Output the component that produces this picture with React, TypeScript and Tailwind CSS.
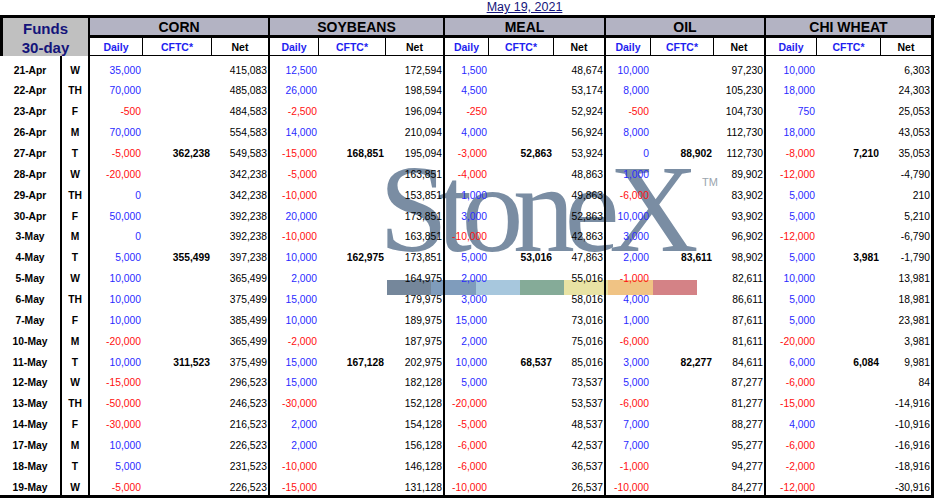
import React from "react";

type Cell = [string, string, string];

type Group = {
  name: string;
  d: string;
  c: string;
  n: string;
  edge: string;
};

const groups: Group[] = [
  { name: "CORN", d: "w-[53px]", c: "w-[69px]", n: "w-[56px]", edge: "border-r-[2px]" },
  { name: "SOYBEANS", d: "w-[49px]", c: "w-[67px]", n: "w-[57px]", edge: "border-r-[2px]" },
  { name: "MEAL", d: "w-[44px]", c: "w-[65px]", n: "w-[50px]", edge: "border-r-[2px]" },
  { name: "OIL", d: "w-[45px]", c: "w-[63px]", n: "w-[50px]", edge: "border-r-[2px]" },
  { name: "CHI WHEAT", d: "w-[51px]", c: "w-[64px]", n: "w-[50px]", edge: "border-r-[3px]" },
];

const rows: { date: string; day: string; v: Cell[] }[] = [
  { date: "21-Apr", day: "W", v: [["35,000", "", "415,083"], ["12,500", "", "172,594"], ["1,500", "", "48,674"], ["10,000", "", "97,230"], ["10,000", "", "6,303"]] },
  { date: "22-Apr", day: "TH", v: [["70,000", "", "485,083"], ["26,000", "", "198,594"], ["4,500", "", "53,174"], ["8,000", "", "105,230"], ["18,000", "", "24,303"]] },
  { date: "23-Apr", day: "F", v: [["-500", "", "484,583"], ["-2,500", "", "196,094"], ["-250", "", "52,924"], ["-500", "", "104,730"], ["750", "", "25,053"]] },
  { date: "26-Apr", day: "M", v: [["70,000", "", "554,583"], ["14,000", "", "210,094"], ["4,000", "", "56,924"], ["8,000", "", "112,730"], ["18,000", "", "43,053"]] },
  { date: "27-Apr", day: "T", v: [["-5,000", "362,238", "549,583"], ["-15,000", "168,851", "195,094"], ["-3,000", "52,863", "53,924"], ["0", "88,902", "112,730"], ["-8,000", "7,210", "35,053"]] },
  { date: "28-Apr", day: "W", v: [["-20,000", "", "342,238"], ["-5,000", "", "163,851"], ["-4,000", "", "48,863"], ["1,000", "", "89,902"], ["-12,000", "", "-4,790"]] },
  { date: "29-Apr", day: "TH", v: [["0", "", "342,238"], ["-10,000", "", "153,851"], ["1,000", "", "49,863"], ["-6,000", "", "83,902"], ["5,000", "", "210"]] },
  { date: "30-Apr", day: "F", v: [["50,000", "", "392,238"], ["20,000", "", "173,851"], ["3,000", "", "52,863"], ["10,000", "", "93,902"], ["5,000", "", "5,210"]] },
  { date: "3-May", day: "M", v: [["0", "", "392,238"], ["-10,000", "", "163,851"], ["-10,000", "", "42,863"], ["3,000", "", "96,902"], ["-12,000", "", "-6,790"]] },
  { date: "4-May", day: "T", v: [["5,000", "355,499", "397,238"], ["10,000", "162,975", "173,851"], ["5,000", "53,016", "47,863"], ["2,000", "83,611", "98,902"], ["5,000", "3,981", "-1,790"]] },
  { date: "5-May", day: "W", v: [["10,000", "", "365,499"], ["2,000", "", "164,975"], ["2,000", "", "55,016"], ["-1,000", "", "82,611"], ["10,000", "", "13,981"]] },
  { date: "6-May", day: "TH", v: [["10,000", "", "375,499"], ["15,000", "", "179,975"], ["3,000", "", "58,016"], ["4,000", "", "86,611"], ["5,000", "", "18,981"]] },
  { date: "7-May", day: "F", v: [["10,000", "", "385,499"], ["10,000", "", "189,975"], ["15,000", "", "73,016"], ["1,000", "", "87,611"], ["5,000", "", "23,981"]] },
  { date: "10-May", day: "M", v: [["-20,000", "", "365,499"], ["-2,000", "", "187,975"], ["2,000", "", "75,016"], ["-6,000", "", "81,611"], ["-20,000", "", "3,981"]] },
  { date: "11-May", day: "T", v: [["10,000", "311,523", "375,499"], ["15,000", "167,128", "202,975"], ["10,000", "68,537", "85,016"], ["3,000", "82,277", "84,611"], ["6,000", "6,084", "9,981"]] },
  { date: "12-May", day: "W", v: [["-15,000", "", "296,523"], ["15,000", "", "182,128"], ["5,000", "", "73,537"], ["5,000", "", "87,277"], ["-6,000", "", "84"]] },
  { date: "13-May", day: "TH", v: [["-50,000", "", "246,523"], ["-30,000", "", "152,128"], ["-20,000", "", "53,537"], ["-6,000", "", "81,277"], ["-15,000", "", "-14,916"]] },
  { date: "14-May", day: "F", v: [["-30,000", "", "216,523"], ["2,000", "", "154,128"], ["-5,000", "", "48,537"], ["7,000", "", "88,277"], ["4,000", "", "-10,916"]] },
  { date: "17-May", day: "M", v: [["10,000", "", "226,523"], ["2,000", "", "156,128"], ["-6,000", "", "42,537"], ["7,000", "", "95,277"], ["-6,000", "", "-16,916"]] },
  { date: "18-May", day: "T", v: [["5,000", "", "231,523"], ["-10,000", "", "146,128"], ["-6,000", "", "36,537"], ["-1,000", "", "94,277"], ["-2,000", "", "-18,916"]] },
  { date: "19-May", day: "W", v: [["-5,000", "", "226,523"], ["-15,000", "", "131,128"], ["-10,000", "", "26,537"], ["-10,000", "", "84,277"], ["-12,000", "", "-30,916"]] },
];

const bar = [
  "bg-[#75879b]",
  "bg-[#7f9cbc]",
  "bg-[#a7c7dd]",
  "bg-[#85ab98]",
  "bg-[#e8e3a4]",
  "bg-[#f0c384]",
  "bg-[#d48286]",
];

function DataRow({ date, day, v, h }: { date: string; day: string; v: Cell[]; h: string }) {
  return (
    <div className={`flex ${h} shrink-0`}>
      <div className="w-[62px] border-r-[2px] border-black flex items-center justify-center font-bold">
        {date}
      </div>
      <div className="w-[28px] border-r-[2px] border-black flex items-center justify-center font-bold">
        {day}
      </div>
      {groups.map((g, i) => {
        const [d, c, n] = v[i] ?? ["", "", ""];
        const neg = d.startsWith("-");
        return (
          <div key={g.name} className={`flex ${g.edge} border-black`}>
            <div
              className={`${g.d} flex items-center justify-end pr-[2px] ${neg ? "text-[#ff1010]" : "text-[#2a2aff]"}`}
            >
              {d}
            </div>
            <div className={`${g.c} flex items-center justify-end pr-[2px] font-bold`}>{c}</div>
            <div className={`${g.n} flex items-center justify-end pr-[1px]`}>{n}</div>
          </div>
        );
      })}
    </div>
  );
}

export default function App() {
  return (
    <div className="relative w-[935px] h-[501px] overflow-hidden bg-white text-black font-['Liberation_Sans',Arial,sans-serif]">
      {/* watermark sits behind the sheet */}
      <div className="absolute inset-0 pointer-events-none">
        <span className="absolute left-[379px] top-[148px] text-[124px] leading-none tracking-[-10.5px] text-[#7a8da3] font-['Liberation_Serif','Times_New_Roman',serif]">
          StoneX
        </span>
        <span className="absolute left-[702px] top-[177px] text-[11px] leading-none text-[#9aa4ae]">TM</span>
        <div className="absolute left-[387px] top-[280px] flex h-[15px]">
          {bar.map((b) => (
            <div key={b} className={`w-[44.3px] h-full ${b}`} />
          ))}
        </div>
      </div>

      <div className="relative">
        <div className="flex h-[15px]">
          <div className="w-[445px]" />
          <div className="w-[159px] text-center text-[12.5px] leading-[15px] text-[#14147a] underline">
            May 19, 2021
          </div>
        </div>
        <div className="h-[3px] bg-black" />

        <div className="flex h-[38px]">
          <div className="w-[90px] border-l-[3px] border-r-[2px] border-black bg-[#c0c0c0] flex flex-col items-center text-[15px] font-bold text-[#14147a] leading-[19px]">
            <span className="mt-[1px]">Funds</span>
            <span>30-day</span>
          </div>
          {groups.map((g) => (
            <div key={g.name} className={`flex flex-col ${g.edge} border-black`}>
              <div className="h-[17px] bg-[#b3b3c3] flex items-center justify-center text-[14px] leading-none font-bold">
                {g.name}
              </div>
              <div className="h-[3px] bg-black" />
              <div className="flex h-[18px] border-b border-black text-[10.5px] leading-none font-bold">
                <div className={`${g.d} border-r border-black flex items-end justify-center pb-[3px] text-[#1e1ef0]`}>
                  Daily
                </div>
                <div className={`${g.c} border-r border-black flex items-end justify-center pb-[3px] text-[#1e1ef0]`}>
                  CFTC*
                </div>
                <div className={`${g.n} flex items-end justify-center pb-[3px]`}>Net</div>
              </div>
            </div>
          ))}
        </div>

        <div className="flex flex-col h-[438.5px] overflow-hidden text-[10.3px] leading-none">
          <DataRow date="" day="" v={[]} h="h-[4.3px]" />
          {rows.map((r) => (
            <DataRow key={r.date} date={r.date} day={r.day} v={r.v} h="h-[20.87px]" />
          ))}
        </div>
        <div className="h-[3.5px] w-[934px] bg-black" />
      </div>
    </div>
  );
}
